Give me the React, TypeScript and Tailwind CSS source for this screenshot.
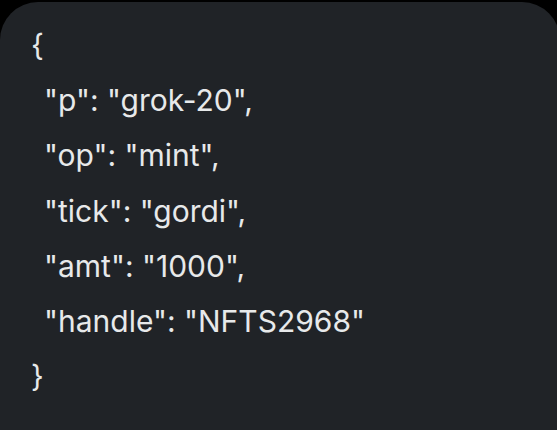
const lines = [
  '"p": "grok-20",',
  '"op": "mint",',
  '"tick": "gordi",',
  '"amt": "1000",',
  '"handle": "NFTS2968"',
];

export default function App() {
  return (
    <div className="w-[557px] h-[430px] bg-black overflow-hidden pt-[2px]">
      <div
        className="w-[560px] h-[440px] bg-[#202327] rounded-t-[38px] pl-[31px] pt-[16px] text-[#e7e9ea] text-[30px] leading-[55.2px]"
        style={{ fontFamily: 'Inter, "Open Sans", sans-serif' }}
      >
        <div>{"{"}</div>
        {lines.map((l) => (
          <div key={l} className="pl-[13px] whitespace-pre">{l}</div>
        ))}
        <div>{"}"}</div>
      </div>
    </div>
  );
}
